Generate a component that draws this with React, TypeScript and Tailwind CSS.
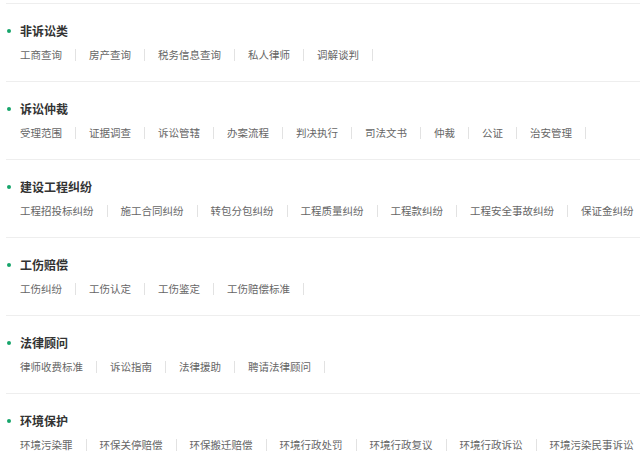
const sections: { title: string; items: string[] }[] = [
  { title: '非诉讼类', items: ['工商查询', '房产查询', '税务信息查询', '私人律师', '调解谈判'] },
  { title: '诉讼仲裁', items: ['受理范围', '证据调查', '诉讼管辖', '办案流程', '判决执行', '司法文书', '仲裁', '公证', '治安管理'] },
  { title: '建设工程纠纷', items: ['工程招投标纠纷', '施工合同纠纷', '转包分包纠纷', '工程质量纠纷', '工程款纠纷', '工程安全事故纠纷', '保证金纠纷'] },
  { title: '工伤赔偿', items: ['工伤纠纷', '工伤认定', '工伤鉴定', '工伤赔偿标准'] },
  { title: '法律顾问', items: ['律师收费标准', '诉讼指南', '法律援助', '聘请法律顾问'] },
  { title: '环境保护', items: ['环境污染罪', '环保关停赔偿', '环保搬迁赔偿', '环境行政处罚', '环境行政复议', '环境行政诉讼', '环境污染民事诉讼'] },
]

export default function App() {
  return (
    <div
      className="w-[640px] h-[461px] overflow-hidden bg-white pt-[3px] pl-[6px]"
      style={{ fontFamily: '"Noto Sans CJK SC", "Noto Sans", sans-serif' }}
    >
      {sections.map(s => (
        <div key={s.title} className="border-t border-[#eeeeee] pt-[18px] pb-[18px]">
          <div className="flex items-center h-[18px]">
            <span className="ml-[1px] w-[4px] h-[4px] rounded-full bg-[#16a56b]" />
            <span className="ml-[9px] text-[12px] leading-[18px] font-bold text-[#333333]">{s.title}</span>
          </div>
          <div className="mt-[7px] ml-[14px] flex items-center h-[16px] whitespace-nowrap">
            {s.items.map(it => (
              <div key={it} className="flex items-center">
                <span className="text-[10.5px] leading-[16px] text-[#666666]">{it}</span>
                <span className="mx-[13px] w-px h-[12px] bg-[#e2e2e2]" />
              </div>
            ))}
          </div>
        </div>
      ))}
    </div>
  )
}
